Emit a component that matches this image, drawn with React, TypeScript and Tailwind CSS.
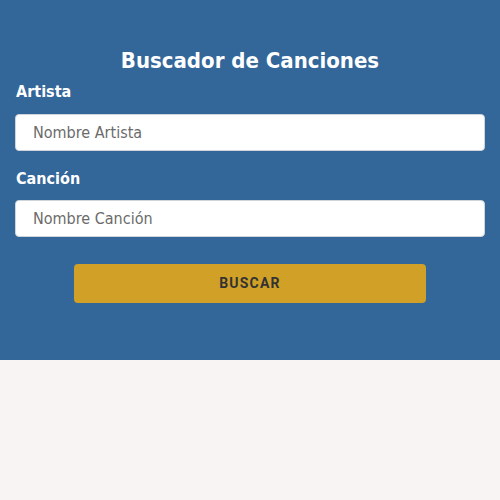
export default function App() {
  return (
    <div className="min-h-[500px] bg-[#f8f4f3]">
      {/* HEADER / FORM */}
      <div className="h-[360px] bg-[#336699] px-[15px] pt-[44px] [font-family:'DejaVu_Sans_Condensed','DejaVu_Sans',sans-serif]">
        <h1 className="text-center text-[22px] font-bold leading-[34px] text-white">
          Buscador de Canciones
        </h1>

        <form className="mt-[2px]" onSubmit={(e) => e.preventDefault()}>
          <label className="block pl-[1px] text-[16px] font-bold leading-[24px] text-white">Artista</label>
          <input
            placeholder="Nombre Artista"
            className="mt-[10px] block h-[37px] w-full rounded-[4px] border border-[#cfd4da] bg-white px-[17px] text-[16px] text-[#555] placeholder:text-[#6b6b6b]"
          />

          <label className="mt-[16px] block pl-[1px] text-[16px] font-bold leading-[24px] text-white">Canción</label>
          <input
            placeholder="Nombre Canción"
            className="mt-[9px] block h-[37px] w-full rounded-[4px] border border-[#cfd4da] bg-white px-[17px] text-[16px] text-[#555] placeholder:text-[#6b6b6b]"
          />

          <div className="mt-[27px] flex justify-center">
            <button className="h-[39px] w-[352px] rounded-[4px] bg-[#d1a026] text-[14px] font-bold tracking-[1.2px] text-[#333] [font-family:'Roboto','Liberation_Sans',sans-serif]">
              BUSCAR
            </button>
          </div>
        </form>
      </div>
    </div>
  );
}
